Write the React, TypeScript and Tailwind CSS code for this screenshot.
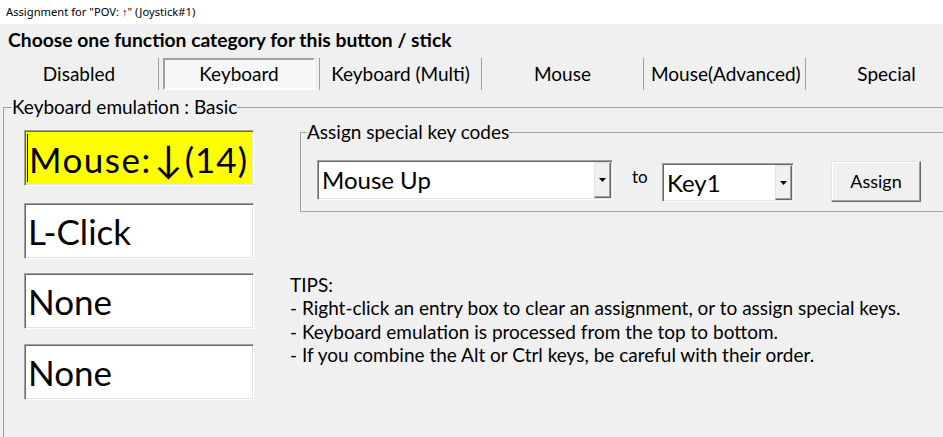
import React from "react";

const sunken =
  "border border-t-[#a0a0a0] border-l-[#a0a0a0] border-r-white border-b-white shadow-[inset_1px_1px_0_#696969,inset_-1px_-1px_0_#e3e3e3]";

function EntryBox({ children, active }: { children: React.ReactNode; active?: boolean }) {
  return (
    <div className={`w-[230px] h-[56px] flex items-center pl-[3px] overflow-hidden ${sunken} ${active ? "bg-[#ffff00]" : "bg-white"}`}>
      {active && <span className="w-[1px] h-[48px] bg-black mr-[1px] -ml-[1px] shrink-0" />}
      <span className="text-[35px] leading-none whitespace-nowrap">{children}</span>
    </div>
  );
}

function Combo({ value, width, height }: { value: string; width: string; height: string }) {
  return (
    <div className={`${width} ${height} bg-white flex items-stretch ${sunken} p-[1px]`}>
      <span className="flex-1 flex items-center pl-[3px] text-[24px] whitespace-nowrap overflow-hidden">{value}</span>
      <span className="w-[17px] bg-[#f0f0f0] flex items-center justify-center border border-t-[#e3e3e3] border-l-[#e3e3e3] border-r-[#696969] border-b-[#696969] shadow-[inset_-1px_-1px_0_#a0a0a0]">
        <svg width="7" height="4" viewBox="0 0 7 4">
          <path d="M0 0h7L3.5 4z" fill="#000" />
        </svg>
      </span>
    </div>
  );
}

function Sep() {
  return <div className="w-[1px] h-[32px] bg-[#a0a0a0] shrink-0" />;
}

export default function App() {
  return (
    <div className="w-[943px] h-[437px] overflow-hidden bg-[#f0f0f0] text-black font-['Lato',sans-serif]">
      {/* title bar */}
      <div className="h-[24px] bg-white flex items-center pl-[6px] text-[11.2px] font-['Noto_Sans',sans-serif]">
        Assignment for "POV: ↑" (Joystick#1)
      </div>

      {/* heading */}
      <div className="h-[34px] flex items-center pl-[8px] pb-[2px] text-[19.3px] font-bold">
        Choose one function category for this button / stick
      </div>

      {/* category tabs */}
      <div className="h-[32px] flex items-center text-[19px] whitespace-nowrap">
        <div className="w-[158px] shrink-0 text-center">Disabled</div>
        <Sep />
        <div className="w-[160px] h-[32px] shrink-0 px-[4px]">
          <div className="h-full flex items-center justify-center border-2 border-t-[#a0a0a0] border-l-[#a0a0a0] border-r-white border-b-white bg-[repeating-conic-gradient(#ffffff_0_25%,#f0f0f0_0_50%)] bg-[length:2px_2px]">
            Keyboard
          </div>
        </div>
        <Sep />
        <div className="w-[161px] shrink-0 text-center">Keyboard (Multi)</div>
        <Sep />
        <div className="w-[161px] shrink-0 text-center">Mouse</div>
        <Sep />
        <div className="w-[161px] shrink-0 pl-[7px] overflow-hidden">Mouse(Advanced)</div>
        <Sep />
        <div className="w-[161px] shrink-0 text-center">Special</div>
      </div>

      {/* keyboard emulation group */}
      <fieldset className="mt-[7px] ml-[3px] h-[345px] border-l border-t border-[#a0a0a0] min-w-0">
        <legend className="ml-[8px] h-[20px] leading-[20px] text-[19px]">Keyboard emulation : Basic</legend>
        <div className="flex">
          <div className="pl-[20px] pt-[13px] flex flex-col shrink-0">
            <EntryBox active>
              <span className="tracking-[1.5px]">Mouse:</span>
              <span className="inline-block w-[33px] text-center text-[38px]">↓</span>
              <span className="tracking-[1px]">(14)</span>
            </EntryBox>
            <div className="mt-[17px]">
              <EntryBox>L-Click</EntryBox>
            </div>
            <div className="mt-[14px]">
              <EntryBox>None</EntryBox>
            </div>
            <div className="mt-[15px]">
              <EntryBox>None</EntryBox>
            </div>
          </div>

          <div className="flex-1 min-w-0">
            <fieldset className="mt-[5px] ml-[46px] -mr-[1px] h-[90px] border border-[#a0a0a0]">
              <legend className="ml-[6px] h-[20px] leading-[20px] text-[19px]">Assign special key codes</legend>
              <div className="flex items-center pl-[16px] pt-[16px]">
                <Combo value="Mouse Up" width="w-[296px]" height="h-[40px]" />
                <span className="ml-[19px] w-[30px] text-[17px] -mt-[6px]">to</span>
                <div className="mt-[5px]">
                  <Combo value="Key1" width="w-[132px]" height="h-[39px]" />
                </div>
                <button className="ml-[37px] mt-[3px] w-[90px] h-[41px] bg-[#f0f0f0] text-[18px] border border-t-[#e3e3e3] border-l-[#e3e3e3] border-r-[#696969] border-b-[#696969] shadow-[inset_-1px_-1px_0_#a0a0a0,inset_1px_1px_0_#ffffff]">
                  Assign
                </button>
              </div>
            </fieldset>

            <div className="mt-[61px] ml-[36px] text-[19px] leading-[23.3px] whitespace-nowrap">
              <div>TIPS:</div>
              <div>- Right-click an entry box to clear an assignment, or to assign special keys.</div>
              <div>- Keyboard emulation is processed from the top to bottom.</div>
              <div>- If you combine the Alt or Ctrl keys, be careful with their order.</div>
            </div>
          </div>
        </div>
      </fieldset>
    </div>
  );
}
